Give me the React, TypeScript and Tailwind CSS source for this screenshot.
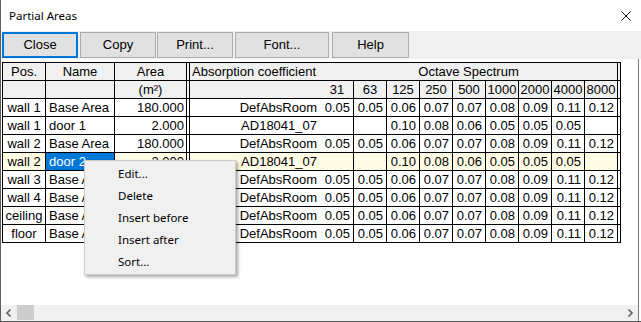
import React from "react";

const full = ["0.05", "0.05", "0.06", "0.07", "0.07", "0.08", "0.09", "0.11", "0.12"];
const door = ["", "", "0.10", "0.08", "0.06", "0.05", "0.05", "0.05", ""];

const rows = [
  { pos: "wall 1", name: "Base Area", area: "180.000", abs: "DefAbsRoom", v: full },
  { pos: "wall 1", name: "door 1", area: "2.000", abs: "AD18041_07", v: door },
  { pos: "wall 2", name: "Base Area", area: "180.000", abs: "DefAbsRoom", v: full },
  { pos: "wall 2", name: "door 2", area: "2.000", abs: "AD18041_07", v: door },
  { pos: "wall 3", name: "Base Area", area: "180.000", abs: "DefAbsRoom", v: full },
  { pos: "wall 4", name: "Base Area", area: "180.000", abs: "DefAbsRoom", v: full },
  { pos: "ceiling", name: "Base Area", area: "180.000", abs: "DefAbsRoom", v: full },
  { pos: "floor", name: "Base Area", area: "180.000", abs: "DefAbsRoom", v: full },
];

const freqs = ["31", "63", "125", "250", "500", "1000", "2000", "4000", "8000"];

const cell = "border-r border-b border-black whitespace-nowrap overflow-hidden leading-[17px]";

function Btn({ label, w, ml, focus }: { label: string; w: string; ml: string; focus?: boolean }) {
  return (
    <div
      className={`${w} ${ml} h-[26px] bg-[#e1e1e1] flex items-center justify-center text-[13px] ${
        focus ? "border-2 border-[#0078d7]" : "border border-[#adadad]"
      }`}
    >
      {label}
    </div>
  );
}

export default function App() {
  return (
    <div className="w-[641px] h-[322px] bg-white border-l border-b border-[#5f5f5f] flex flex-col relative overflow-hidden text-black font-['Liberation_Sans',Arial,sans-serif]">
      {/* Title bar */}
      <div className="h-[31px] shrink-0 flex items-center justify-between pl-[8px] pr-[10px]">
        <span className="font-['Noto_Sans',sans-serif] text-[11.5px] leading-none">Partial Areas</span>
        <svg width="10" height="10" viewBox="0 0 10 10">
          <path d="M0.5 0.5 L9.5 9.5 M9.5 0.5 L0.5 9.5" stroke="#111" strokeWidth="1" />
        </svg>
      </div>

      {/* Toolbar */}
      <div className="h-[28px] shrink-0 bg-[#f0f0f0] flex items-start pt-px pl-px">
        <Btn label="Close" w="w-[76px]" ml="ml-0" focus />
        <Btn label="Copy" w="w-[76px]" ml="ml-[2px]" />
        <Btn label="Print..." w="w-[76px]" ml="ml-px" />
        <Btn label="Font..." w="w-[94px]" ml="ml-[2px]" />
        <Btn label="Help" w="w-[77px]" ml="ml-[3px]" />
      </div>

      {/* Grid panel */}
      <div className="flex flex-1 min-h-0">
        <div className="w-[638px] flex flex-col border-r border-[#7a7a7a]">
          <div className="flex-1 min-h-0 pl-px">
            <div className="inline-grid grid-cols-[43px_69px_72px_3px_130px_34px_33px_33px_33px_33px_33px_33px_33px_33px_3px] auto-rows-[18px] border-l border-t border-black text-[13px]">
              {/* Header row 1 */}
              <div className={`${cell} bg-[#f0f0f0] text-center`}>Pos.</div>
              <div className={`${cell} bg-[#f0f0f0] text-center`}>Name</div>
              <div className={`${cell} bg-[#f0f0f0] text-center`}>Area</div>
              <div className={`${cell} bg-[#f0f0f0]`}></div>
              <div className="border-b border-black bg-[#f0f0f0] pl-[2px] whitespace-nowrap overflow-visible leading-[17px]">
                Absorption coefficient
              </div>
              <div className={`${cell} bg-[#f0f0f0] text-center col-span-9`}>Octave Spectrum</div>
              <div className={`${cell} bg-[#f0f0f0]`}></div>

              {/* Header row 2 */}
              <div className={`${cell} bg-[#f0f0f0]`}></div>
              <div className={`${cell} bg-[#f0f0f0]`}></div>
              <div className={`${cell} bg-[#f0f0f0] text-center`}>(m²)</div>
              <div className={`${cell} bg-[#f0f0f0]`}></div>
              <div className="border-b border-black bg-[#f0f0f0]"></div>
              {freqs.map((f, i) => (
                <div key={f} className={`${cell} bg-[#f0f0f0] text-center ${i === 0 ? "pl-px" : ""}`}>
                  {f}
                </div>
              ))}
              <div className={`${cell} bg-[#f0f0f0]`}></div>

              {/* Data rows */}
              {rows.map((r, ri) => {
                const sel = ri === 3;
                const bg = sel ? "bg-[#fffce6]" : "bg-white";
                return (
                  <React.Fragment key={ri}>
                    <div className={`${cell} ${bg} text-center`}>{r.pos}</div>
                    <div className={`${cell} ${sel ? "bg-[#0078d7] text-white" : bg} pl-[3px]`}>{r.name}</div>
                    <div className={`${cell} ${bg} text-right pr-[2px]`}>{r.area}</div>
                    <div className={`${cell} bg-white`}></div>
                    <div className={`border-b border-black ${bg} text-right pr-[3px] whitespace-nowrap leading-[17px]`}>
                      {r.abs}
                    </div>
                    {r.v.map((v, vi) => (
                      <div key={vi} className={`${cell} ${bg} text-right pr-[3px]`}>
                        {v}
                      </div>
                    ))}
                    <div className={`${cell} bg-white`}></div>
                  </React.Fragment>
                );
              })}
            </div>
          </div>

          {/* Horizontal scrollbar */}
          <div className="h-[16px] shrink-0 bg-[#f0f0f0] flex items-stretch">
            <div className="w-[16px] flex items-center justify-center">
              <svg width="8" height="8" viewBox="0 0 8 8">
                <path d="M5.5 0.5 L2 4 L5.5 7.5" stroke="#606060" strokeWidth="1.6" fill="none" />
              </svg>
            </div>
            <div className="w-[17px] bg-[#cdcdcd] my-0 h-[15px]"></div>
            <div className="flex-1"></div>
            <div className="w-[16px] flex items-center justify-center">
              <svg width="8" height="8" viewBox="0 0 8 8">
                <path d="M2.5 0.5 L6 4 L2.5 7.5" stroke="#606060" strokeWidth="1.6" fill="none" />
              </svg>
            </div>
          </div>
        </div>
        <div className="flex-1 bg-white"></div>
      </div>

      {/* Context menu */}
      <div className="absolute left-[83px] top-[160px] w-[152px] h-[115px] bg-[#f0f0f0] border border-[#cccccc] shadow-[2px_2px_3px_rgba(0,0,0,0.35)] pt-[2px] font-['Noto_Sans',sans-serif] text-[11.5px]">
        {["Edit...", "Delete", "Insert before", "Insert after", "Sort..."].map((m) => (
          <div key={m} className="h-[22px] flex items-center pl-[33px]">
            {m}
          </div>
        ))}
      </div>
    </div>
  );
}
